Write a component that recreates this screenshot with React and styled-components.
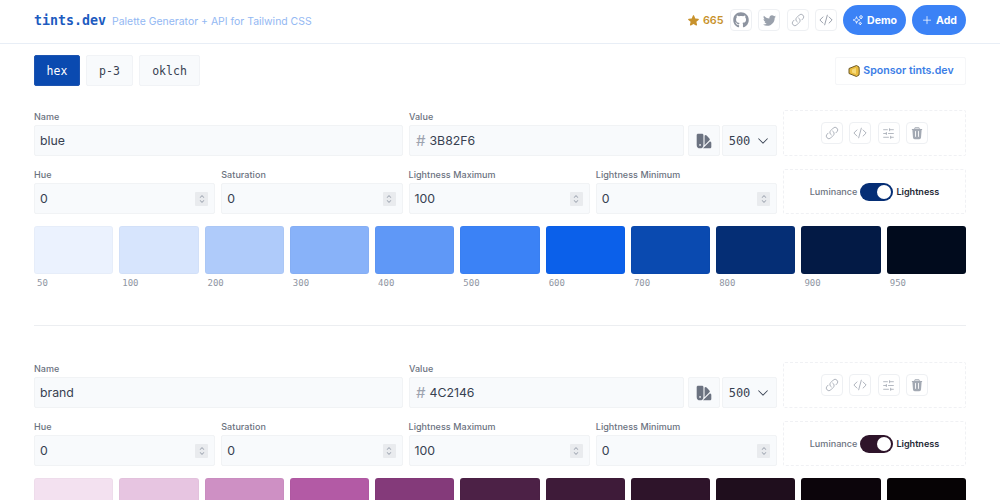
import React from "react";
import styled, { createGlobalStyle } from "styled-components";
import { FaGithub, FaTwitter } from "react-icons/fa";
import { HiStar, HiOutlineLink, HiOutlineCodeBracket, HiOutlineSparkles, HiPlus, HiTrash, HiSwatch, HiChevronDown, HiChevronUpDown } from "react-icons/hi2";
import { SlidersHorizontal } from "lucide-react";

const Global = createGlobalStyle`
  html, body { margin: 0; background: #fff; overflow: hidden; height: 500px; }
  body { font-family: Inter, "Noto Sans", sans-serif; color: #1f2937; }
  * { box-sizing: border-box; }
`;
const MONO = `"DejaVu Sans Mono", "Liberation Mono", monospace`;

const Header = styled.header`
  height: 44px; border-bottom: 1px solid #e8eef6; padding: 0 34px 3px;
  display: flex; align-items: center; justify-content: space-between;
`;
const Brand = styled.div`display: flex; align-items: baseline; gap: 6px;`;
const Logo = styled.span`font: 700 13.3px ${MONO}; color: #1d5bbf;`;
const Tagline = styled.span`font-size: 10.45px; font-weight: 400; color: #93b8f3;`;
const HeaderRight = styled.div`display: flex; align-items: center;`;
const Stars = styled.div`display: flex; align-items: center; gap: 3px; font-size: 10.8px; font-weight: 600; color: #c8922c; margin-right: 6px;`;
const IconSquare = styled.div`
  width: 22px; height: 22px; border: 1px solid #eef0f3; border-radius: 4px; flex: none;
  display: flex; align-items: center; justify-content: center;
  color: ${p => p.$color || "#a3a9b3"}; background: #fff;
  & + & { margin-left: 6.5px; }
`;
const Pill = styled.div`
  height: 30px; width: ${p => p.$w}px; margin-left: 6px; border-radius: 15px; background: #3b82f6; color: #fff;
  display: flex; align-items: center; justify-content: center; gap: 3px;
  font-size: 10.5px; font-weight: 700;
`;
const Main = styled.main`padding: 11px 34px 0;`;
const TopRow = styled.div`display: flex; align-items: center; justify-content: space-between;`;
const Tabs = styled.div`display: flex; gap: 6px;`;
const Tab = styled.div`
  height: 31px; width: ${p => p.$w}px; display: flex; align-items: center; justify-content: center; border-radius: 2px;
  font: 500 11.5px ${MONO}; border: 1px solid ${p => p.$active ? "#1d54b0" : "#f1f3f6"};
  background: ${p => p.$active ? "#0a4ab0" : "#f8fafc"}; color: ${p => p.$active ? "#fff" : "#374151"};
`;
const Sponsor = styled.div`
  width: 131px; height: 28px; border: 1px solid #f5f6f8; border-radius: 2px;
  display: flex; align-items: center; justify-content: center; gap: 2px;
  font-size: 10.6px; font-weight: 600; color: #3b7de6;
`;
const Section = styled.section`
  padding-top: ${p => p.$first ? 24 : 36}px; padding-bottom: 36px;
  border-bottom: ${p => p.$last ? "none" : "1px solid #eceef1"};
`;
const FormGrid = styled.div`
  display: grid; grid-template-columns: 743px 183px; column-gap: 6px; row-gap: 13px;
  grid-template-rows: 46px 45px;
`;
const RowOne = styled.div`display: grid; grid-template-columns: 369px 1fr; column-gap: 6px; align-items: end;`;
const ValueGroup = styled.div`display: flex; align-items: flex-end;`;
const RowTwo = styled.div`display: grid; grid-template-columns: repeat(4, 181.25px); column-gap: 6px; align-items: end;`;
const Field = styled.div`display: flex; flex-direction: column; flex: ${p => p.$grow ? 1 : "initial"};`;
const Label = styled.label`font-size: 9px; font-weight: 500; color: #6b7280; line-height: 9px; margin-bottom: 4px; letter-spacing: .05px;`;
const InputBox = styled.div`
  height: 31px; background: #f8fafc; border: 1px solid #f1f3f5; border-radius: 2px;
  display: flex; align-items: center; justify-content: space-between; padding: 0 6px 0 5px;
  font-size: 12.3px; color: #374151;
`;
const Hash = styled.span`color: #9ca3af; font-size: 15px; margin-right: 4px; margin-left: 1px;`;
const HexText = styled.span`flex: 1; font-size: 12.3px; color: #374151;`;
const Step = styled.span`
  width: 13px; height: 14px; background: #e9ebee; border-radius: 1px; color: #9ca3af;
  display: flex; align-items: center; justify-content: center;
`;
const SmallBtn = styled.div`
  height: 31px; width: 32px; margin-left: 4px; background: #f8fafc; border: 1px solid #f1f3f5; border-radius: 2px;
  display: flex; align-items: center; justify-content: center; color: #6b7280;
`;
const SelectBox = styled.div`
  height: 31px; width: 55px; margin-left: 2px; background: #f8fafc; border: 1px solid #f1f3f5; border-radius: 2px;
  display: flex; align-items: center; justify-content: center;
  gap: 6px; font: 500 12px ${MONO}; color: #374151;
`;
const Dashed = styled.div`
  border: 1px dashed #f0f1f4; border-radius: 2px;
  display: flex; align-items: center; justify-content: center; gap: ${p => p.$gap || 0}px;
`;
const Toggle = styled.div`
  width: 33px; height: 18px; border-radius: 9px; background: ${p => p.$color};
  display: flex; align-items: center; justify-content: flex-end; padding-right: 2px;
`;
const Knob = styled.span`width: 14px; height: 14px; border-radius: 50%; background: #fff;`;
const ToggleLabel = styled.span`font-size: 9.1px; font-weight: ${p => p.$on ? 600 : 500}; color: ${p => p.$on ? "#1f2937" : "#6b7280"};`;
const Swatches = styled.div`display: grid; grid-template-columns: repeat(11, 1fr); column-gap: 6px; margin-top: 12px;`;
const SwatchCol = styled.div`display: flex; flex-direction: column;`;
const Swatch = styled.div`height: 48px; border-radius: 3px; background: ${p => p.$bg}; box-shadow: inset 0 0 0 1px rgba(0,0,0,.02);`;
const SwatchLabel = styled.span`font: 400 9px ${MONO}; color: #8f96a3; padding: 4px 0 0 3px; line-height: 11px;`;

const STEPS = [50,100,200,300,400,500,600,700,800,900,950];

function NumField({ label, value }) {
  return (
    <Field>
      <Label>{label}</Label>
      <InputBox>{value}<Step><HiChevronUpDown size={12} /></Step></InputBox>
    </Field>
  );
}

function PaletteForm({ name, hex, colors, toggle, first, last }) {
  return (
    <Section $first={first} $last={last}>
      <FormGrid>
        <RowOne>
          <Field><Label>Name</Label><InputBox>{name}</InputBox></Field>
          <ValueGroup>
            <Field $grow><Label>Value</Label><InputBox><Hash>#</Hash><HexText>{hex}</HexText></InputBox></Field>
            <SmallBtn><HiSwatch size={18} /></SmallBtn>
            <SelectBox>500<HiChevronDown size={14} /></SelectBox>
          </ValueGroup>
        </RowOne>
        <Dashed>
          <IconSquare><HiOutlineLink size={14} /></IconSquare>
          <IconSquare><HiOutlineCodeBracket size={14} /></IconSquare>
          <IconSquare><SlidersHorizontal size={13} strokeWidth={1.5} /></IconSquare>
          <IconSquare><HiTrash size={14} /></IconSquare>
        </Dashed>
        <RowTwo>
          <NumField label="Hue" value="0" />
          <NumField label="Saturation" value="0" />
          <NumField label="Lightness Maximum" value="100" />
          <NumField label="Lightness Minimum" value="0" />
        </RowTwo>
        <Dashed $gap={3}>
          <ToggleLabel>Luminance</ToggleLabel>
          <Toggle $color={toggle}><Knob /></Toggle>
          <ToggleLabel $on>Lightness</ToggleLabel>
        </Dashed>
      </FormGrid>
      <Swatches>
        {colors.map((c, i) => (
          <SwatchCol key={STEPS[i]}>
            <Swatch $bg={c} />
            {!last && <SwatchLabel>{STEPS[i]}</SwatchLabel>}
          </SwatchCol>
        ))}
      </Swatches>
    </Section>
  );
}

const BLUE = ["#EBF2FE","#D7E5FD","#AFCBFA","#88B2F9","#5F98F7","#3B82F6","#0B60EA","#0A4AB0","#052E75","#031A45","#010B1D"];
const BRAND = ["#F3E1F0","#E7C5E1","#CE90C4","#B35AA5","#843A7A","#4C2146","#3E1B39","#2E142A","#1F0E1D","#0C050B","#060305"];

export default function App() {
  return (
    <>
      <Global />
      <Header>
        <Brand>
          <Logo>tints.dev</Logo>
          <Tagline>Palette Generator + API for Tailwind CSS</Tagline>
        </Brand>
        <HeaderRight>
          <Stars><HiStar size={13} />665</Stars>
          <IconSquare $color="#8d94a0"><FaGithub size={16} /></IconSquare>
          <IconSquare $color="#9aa1ac"><FaTwitter size={13} /></IconSquare>
          <IconSquare><HiOutlineLink size={14} /></IconSquare>
          <IconSquare $color="#8d94a0"><HiOutlineCodeBracket size={14} /></IconSquare>
          <Pill $w={63}><HiOutlineSparkles size={12} />Demo</Pill>
          <Pill $w={54}><HiPlus size={12} />Add</Pill>
        </HeaderRight>
      </Header>
      <Main>
        <TopRow>
          <Tabs>
            <Tab $active $w={46}>hex</Tab>
            <Tab $w={47}>p-3</Tab>
            <Tab $w={61}>oklch</Tab>
          </Tabs>
          <Sponsor>
            <svg width="14" height="14" viewBox="0 0 14 14" aria-hidden="true">
              <path d="M2 4.5 L9.5 1.5 L12 3 Q12.5 7 12 11 L9.5 12.5 L2 9.5 Z" fill="#e9bc3f" stroke="#6f5a24" strokeWidth="1" strokeLinejoin="round" />
              <path d="M5 5.5 L9 4 L9 10 L5 8.5 Z" fill="#f6da7a" />
            </svg>
            Sponsor tints.dev
          </Sponsor>
        </TopRow>
        <PaletteForm first name="blue" hex="3B82F6" colors={BLUE} toggle="#052E75" />
        <PaletteForm last name="brand" hex="4C2146" colors={BRAND} toggle="#2E142A" />
      </Main>
    </>
  );
}
